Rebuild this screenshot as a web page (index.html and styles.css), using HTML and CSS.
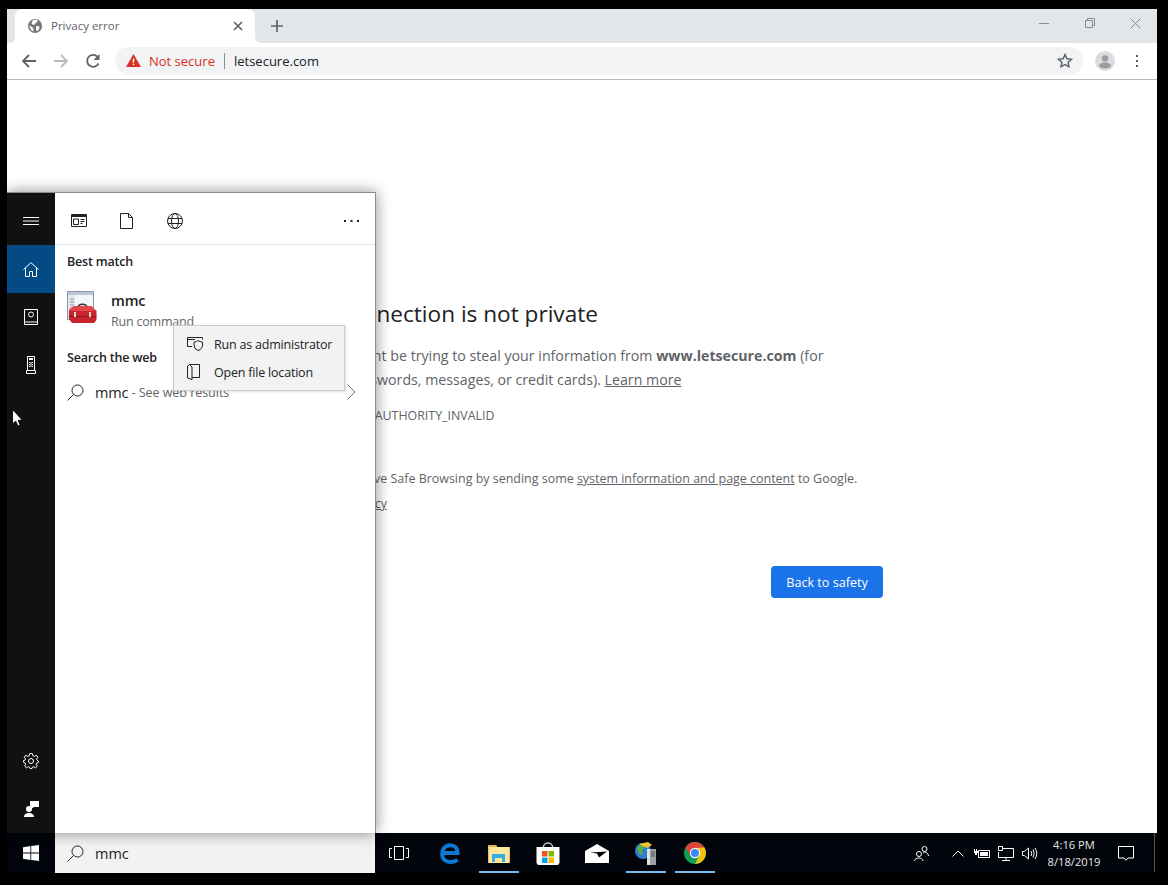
FILE: index.html
```html
<!DOCTYPE html>
<html lang="en">

<head>
    <meta charset="UTF-8">
    <meta name="viewport" content="width=device-width, initial-scale=1.0">
    <title>Privacy error</title>
    <link rel="stylesheet" href="styles.css">
</head>

<body>
    <div class="desktop">
        <!-- browser window -->
        <div class="browser">
            <div class="tabstrip">
                <div class="tab">
                    <svg class="favicon" width="14" height="14" viewBox="0 0 14 14">
                        <circle cx="7" cy="7" r="7" fill="#757575" />
                        <path d="M5 1 L9 .8 L9.5 3 L7.5 4 L7 5.5 L4.5 5.8 L3.5 4 Z M8 7 L11.5 7.5 L11 10.5 L9 12.5 L8 10 Z M1 6.5 L4 8 L5.5 9.5 L5.5 12.5 L3 11 Z" fill="#fff" />
                    </svg>
                    <span class="tab-title">Privacy error</span>
                    <svg class="tab-close" width="10" height="10" viewBox="0 0 10 10">
                        <path d="M1 1 L9 9 M9 1 L1 9" stroke="#5f6368" stroke-width="1.7" />
                    </svg>
                </div>
                <svg class="newtab" width="12" height="12" viewBox="0 0 12 12">
                    <path d="M6 0 V12 M0 6 H12" stroke="#5f6368" stroke-width="1.7" />
                </svg>
                <div class="winbtns">
                    <svg width="10" height="10" viewBox="0 0 10 10"><path d="M0 5.5 H10" stroke="#8a8d90" /></svg>
                    <svg width="10" height="10" viewBox="0 0 10 10"><path d="M.5 2.5 H7.5 V9.5 H.5 Z M2.5 2.5 V.5 H9.5 V7.5 H7.5" fill="none" stroke="#8a8d90" /></svg>
                    <svg width="11" height="11" viewBox="0 0 11 11"><path d="M.5 .5 L10.5 10.5 M10.5 .5 L.5 10.5" stroke="#8a8d90" /></svg>
                </div>
            </div>

            <div class="toolbar">
                <svg class="navicon" width="16" height="16" viewBox="0 0 16 16">
                    <path d="M15 8 H2 M8 2 L2 8 L8 14" fill="none" stroke="#5f6368" stroke-width="1.8" />
                </svg>
                <svg class="navicon" width="16" height="16" viewBox="0 0 16 16">
                    <path d="M1 8 H14 M8 2 L14 8 L8 14" fill="none" stroke="#b9bbbe" stroke-width="1.8" />
                </svg>
                <svg class="navicon" width="16" height="16" viewBox="0 0 16 16">
                    <path d="M13.5 10.5 A6 6 0 1 1 12.4 3.6" fill="none" stroke="#5f6368" stroke-width="1.8" />
                    <path d="M14.5 1 V7 H8.5 Z" fill="#5f6368" />
                </svg>
                <div class="omnibox">
                    <svg width="15" height="13" viewBox="0 0 15 13">
                        <path d="M7.5 0 L15 13 H0 Z" fill="#d93025" />
                        <path d="M6.8 4.5 H8.2 V8.8 H6.8 Z M6.8 9.8 H8.2 V11.2 H6.8 Z" fill="#fff" />
                    </svg>
                    <span class="not-secure">Not secure</span>
                    <span class="omni-sep"></span>
                    <span class="url">letsecure.com</span>
                    <svg class="star" width="16" height="15" viewBox="0 0 16 15">
                        <path d="M8 1.6 L9.9 5.8 L14.5 6.3 L11.1 9.3 L12 13.7 L8 11.5 L4 13.7 L4.9 9.3 L1.5 6.3 L6.1 5.8 Z" fill="none" stroke="#5f6368" stroke-width="1.5" />
                    </svg>
                </div>
                <svg class="avatar" width="20" height="20" viewBox="0 0 20 20">
                    <circle cx="10" cy="10" r="10" fill="#dadce0" />
                    <circle cx="10" cy="7.5" r="3.2" fill="#9a9da1" />
                    <ellipse cx="10" cy="14.5" rx="6" ry="3" fill="#9a9da1" />
                </svg>
                <svg class="dots" width="4" height="14" viewBox="0 0 4 14">
                    <path d="M1 1 H3 V3 H1 Z M1 6 H3 V8 H1 Z M1 11 H3 V13 H1 Z" fill="#5f6368" />
                </svg>
            </div>

            <!-- interstitial -->
            <div class="page">
                <div class="interstitial">
                    <h1>Your connection is not private</h1>
                    <p class="lead">Attackers might be trying to steal your information from <strong>www.letsecure.com</strong> (for example, passwords, messages, or credit cards). <a href="#">Learn more</a></p>
                    <p class="errcode">NET::ERR_CERT_AUTHORITY_INVALID</p>
                    <p class="optin">Help improve Safe Browsing by sending some <a href="#">system information and page content</a> to Google. <a href="#">Privacy policy</a></p>
                    <div class="actions">
                        <button class="advanced">Advanced</button>
                        <button class="safety">Back to safety</button>
                    </div>
                </div>
            </div>
        </div>

        <!-- taskbar -->
        <div class="taskbar">
            <div class="startbtn">
                <svg width="16" height="16" viewBox="0 0 16 16">
                    <path d="M0 2.2 L7.4 1.1 V7.6 H0 Z M8.2 1 L16 0 V7.6 H8.2 Z M0 8.4 H7.4 V14.9 L0 13.8 Z M8.2 8.4 H16 V16 L8.2 15 Z" fill="#fff" />
                </svg>
            </div>
            <div class="searchbox">
                <svg class="lens" width="17" height="17" viewBox="0 0 17 17">
                    <circle cx="10.5" cy="6.5" r="5.5" fill="none" stroke="#222" />
                    <path d="M6.5 10.5 L.5 16.5" stroke="#222" />
                </svg>
                <span>mmc</span>
            </div>
            <div class="apps">
                <div class="app">
                    <svg class="taskview" width="20" height="14" viewBox="0 0 20 14">
                        <path d="M5.5 .5 H14.5 V13.5 H5.5 Z M3 2.5 H.5 V11.5 H3 M17 2.5 H19.5 V11.5 H17" fill="none" stroke="#fff" />
                    </svg>
                </div>
                <div class="app">
                    <svg width="20" height="21" viewBox="0 0 20 21">
                        <path d="M3.5 10 H17.5 C17.5 5 14.5 2.2 10.5 2.2 C5.5 2.2 2.2 6 2.2 11 C2.2 16.5 6 19 10.5 19 C13.5 19 15.5 18.2 17.5 16.8" fill="none" stroke="#0a78d4" stroke-width="4" />
                    </svg>
                </div>
                <div class="app is-open">
                    <svg width="22" height="19" viewBox="0 0 22 19">
                        <path d="M0 1 H8 L9 3 H22 V19 H0 Z" fill="#fce79c" />
                        <path d="M0 1 H8 L9 3 H0 Z" fill="#e8b64a" />
                        <path d="M0 3 H1 V19 H0 Z M21 3 H22 V19 H21 Z" fill="#e3c471" />
                        <path d="M4 18 V10 H17 V18 H14 V14 H7 V18 Z" fill="#35aee6" />
                    </svg>
                </div>
                <div class="app">
                    <svg width="24" height="23" viewBox="0 0 24 23">
                        <path d="M7 7 C7 -1 17 -1 17 7" fill="none" stroke="#ccc" stroke-width="1.5" />
                        <path d="M.5 5 H23.5 V21 L22 23 H2 L.5 21 Z" fill="#fff" />
                        <path d="M6 9 H11.5 V14.5 H6 Z" fill="#f25022" />
                        <path d="M12.5 9 H18 V14.5 H12.5 Z" fill="#7fba00" />
                        <path d="M6 15.5 H11.5 V21 H6 Z" fill="#00a4ef" />
                        <path d="M12.5 15.5 H18 V21 H12.5 Z" fill="#ffb900" />
                    </svg>
                </div>
                <div class="app">
                    <svg width="24" height="19" viewBox="0 0 24 19">
                        <path d="M0 7 L12 0 L24 7 V19 H0 Z" fill="#fff" />
                        <path d="M5 8.5 L22 7.5 L14 13.5 L12 9.5 Z" fill="#01040a" />
                    </svg>
                </div>
                <div class="app is-open">
                    <svg width="24" height="24" viewBox="0 0 24 24">
                        <circle cx="9" cy="10" r="8" fill="#2f7fd0" />
                        <path d="M3 7 L8 2 L12 5 L8 9 L9 14 L5 13 Z" fill="#57b04a" />
                        <path d="M5 3 L14 1 L18 4 L13 7 L9 5 Z" fill="#f2c230" />
                        <path d="M13 8 H22 V24 H13 Z" fill="#9aa0a0" />
                        <path d="M13 8 H16 V24 H13 Z" fill="#dfe3e3" />
                        <path d="M17 11 H21 M17 13 H21 M17 15 H21" stroke="#555" />
                    </svg>
                </div>
                <div class="app is-open">
                    <svg width="22" height="22" viewBox="0 0 22 22">
                        <circle cx="11" cy="11" r="11" fill="#0f9d58" />
                        <path d="M11 0 A11 11 0 0 0 1.5 5.5 L6.5 13.5 L11 6 H20.5 A11 11 0 0 0 11 0 Z" fill="#db4437" />
                        <path d="M20.5 5.5 A11 11 0 0 1 11 22 L15.5 13.5 L11 6 Z" fill="#f4c20d" />
                        <circle cx="11" cy="11" r="5.2" fill="#fff" />
                        <circle cx="11" cy="11" r="4" fill="#4285f4" />
                    </svg>
                </div>
            </div>
            <div class="tray">
                <svg class="tray-people" width="15" height="15" viewBox="0 0 15 15">
                    <circle cx="5" cy="8" r="2.5" fill="none" stroke="#fff" />
                    <path d="M.5 15 C.5 11 9 11 9 15" fill="none" stroke="#fff" />
                    <circle cx="10.5" cy="3" r="2.5" fill="none" stroke="#fff" />
                    <path d="M9 6.5 C11 5.5 14 6.5 14.5 10" fill="none" stroke="#fff" />
                </svg>
                <svg class="tray-chevron" width="12" height="7" viewBox="0 0 12 7">
                    <path d="M.5 6.5 L6 1 L11.5 6.5" fill="none" stroke="#fff" />
                </svg>
                <svg class="tray-battery" width="16" height="11" viewBox="0 0 16 11">
                    <path d="M4.5 2.5 H15.5 V9.5 H4.5 Z" fill="none" stroke="#fff" />
                    <path d="M6 4 H14 V8 H6 Z M0 1 H1 V3 H2 V1 H3 V3 H4 V5 H3 V7 H1 V5 H0 Z" fill="#fff" />
                </svg>
                <svg class="tray-net" width="16" height="15" viewBox="0 0 16 15">
                    <path d="M4 2.5 H15.5 V11.5 H.5 V6" fill="none" stroke="#fff" />
                    <path d="M.5 .5 H4.5 V4.5 H.5 Z M8 11.5 V14.5 M4 14.5 H12" fill="none" stroke="#fff" />
                </svg>
                <svg class="tray-vol" width="16" height="13" viewBox="0 0 16 13">
                    <path d="M.5 4.5 H2.5 L6.5 1 V12 L2.5 8.5 H.5 Z" fill="none" stroke="#fff" />
                    <path d="M9 4 Q10.5 6.5 9 9 M11 2.5 Q13.5 6.5 11 10.5 M13 1 Q16.5 6.5 13 12" fill="none" stroke="#fff" />
                </svg>
                <div class="clock">
                    <span>4:16 PM</span>
                    <span>8/18/2019</span>
                </div>
                <svg class="tray-notif" width="16" height="15" viewBox="0 0 16 15">
                    <path d="M.5 .5 H15.5 V12 H10 L8 14.3 L6 12 H.5 Z" fill="none" stroke="#fff" />
                </svg>
                <span class="show-desktop"></span>
            </div>
        </div>

        <!-- start search panel, sits on top of the browser -->
        <div class="panel">
            <div class="rail">
                <div class="rail-item">
                    <svg width="16" height="8" viewBox="0 0 16 8"><path d="M0 .5 H16 M0 4 H16 M0 7.5 H16" stroke="#fff" /></svg>
                </div>
                <div class="rail-item is-active">
                    <svg width="16" height="15" viewBox="0 0 16 15"><path d="M.5 7.5 L8 .7 L15.5 7.5 M2.5 6 V14.5 H6.5 V9.5 H9.5 V14.5 H13.5 V6" fill="none" stroke="#fff" /></svg>
                </div>
                <div class="rail-item">
                    <svg width="14" height="16" viewBox="0 0 14 16"><path d="M.5 .5 H13.5 V15.5 H.5 Z M.5 13 H13.5" fill="none" stroke="#fff" /><circle cx="7" cy="5.5" r="2.5" fill="none" stroke="#fff" /></svg>
                </div>
                <div class="rail-item">
                    <svg width="10" height="18" viewBox="0 0 10 18"><path d="M1.5 .5 H8.5 V14.5 H1.5 Z M.5 14.5 H9.5 V17.5 H.5 Z" fill="none" stroke="#fff" /><path d="M3 2 H7 V4 H3 Z M3 6 H4 V7 H3 Z M6 6 H7 V7 H6 Z M3 8 H4 V9 H3 Z M6 8 H7 V9 H6 Z M3 10 H4 V11 H3 Z M6 10 H7 V11 H6 Z M4.5 6 H5.5 V11 H4.5 Z" fill="#fff" /></svg>
                </div>
                <div class="rail-gap"></div>
                <div class="rail-item">
                    <svg width="16" height="16" viewBox="0 0 16 16">
                        <circle cx="8" cy="8" r="2.5" fill="none" stroke="#fff" />
                        <path d="M6.7 .5 H9.3 L9.7 2.6 L11.4 3.4 L13.2 2.2 L14.9 4.2 L13.5 5.8 L14 7.2 L15.5 8 V9.3 L13.8 10 L13.3 11.4 L14.3 13.2 L12.4 14.9 L10.8 13.7 L9.5 14.1 L9 15.5 H7 L6.5 14.1 L5.2 13.7 L3.6 14.9 L1.7 13.2 L2.7 11.4 L2.2 10 L.5 9.3 V7.5 L2 7.2 L2.5 5.8 L1.1 4.2 L2.8 2.2 L4.6 3.4 L6.3 2.6 Z" fill="none" stroke="#fff" />
                    </svg>
                </div>
                <div class="rail-item">
                    <svg width="15" height="16" viewBox="0 0 15 16">
                        <circle cx="5" cy="8" r="3" fill="#fff" />
                        <path d="M0 16 C0 10.5 10 10.5 10 16 Z M6 0 H15 V6 H10 L7 8 V5 H6 Z" fill="#fff" />
                    </svg>
                </div>
            </div>
            <div class="results">
                <div class="scopes">
                    <svg width="16" height="13" viewBox="0 0 16 13">
                        <path d="M.5 .5 H15.5 V12.5 H.5 Z" fill="none" stroke="#222" />
                        <path d="M1 1 H15 V3 H1 Z" fill="#222" />
                        <path d="M2.5 5 H7.5 V10.5 H2.5 Z" fill="none" stroke="#222" />
                        <path d="M9.5 5.5 H13.5 M9.5 7.5 H13.5 M9.5 9.5 H11.5" stroke="#222" />
                    </svg>
                    <svg width="13" height="16" viewBox="0 0 13 16">
                        <path d="M.5 .5 H8.5 L12.5 4.5 V15.5 H.5 Z M8.5 .5 V4.5 H12.5" fill="none" stroke="#222" />
                    </svg>
                    <svg class="globe" width="16" height="16" viewBox="0 0 16 16">
                        <circle cx="8" cy="8" r="7.5" fill="none" stroke="#222" />
                        <ellipse cx="8" cy="8" rx="3.5" ry="7.5" fill="none" stroke="#222" />
                        <path d="M1 5.5 H15 M1 10.5 H15" stroke="#222" />
                    </svg>
                    <svg class="more" width="15" height="2" viewBox="0 0 15 2">
                        <path d="M0 0 H2 V2 H0 Z M6.5 0 H8.5 V2 H6.5 Z M13 0 H15 V2 H13 Z" fill="#222" />
                    </svg>
                </div>
                <div class="section-title first">Best match</div>
                <div class="match">
                    <svg width="30" height="33" viewBox="0 0 30 33">
                        <path d="M.5 .5 H26.5 V28.5 H.5 Z" fill="#f4f6f8" stroke="#8996a3" />
                        <path d="M1 1 H26 V4 H1 Z" fill="#b9c7d6" />
                        <path d="M1 4 H8 V28 H1 Z" fill="#e3e8ee" />
                        <path d="M3 8 H7 M3 11 H7 M3 14 H7 M3 17 H7" stroke="#8996a3" />
                        <path d="M11 17 C11 12 20 12 20 17" fill="none" stroke="#333" stroke-width="1.6" />
                        <path d="M2 19 L7 15 H24 L29.5 20 V29 L27 32 H5 L2 28 Z" fill="#c8242b" />
                        <path d="M2 19 L7 15 H24 L29.5 20 H2 Z" fill="#e0474a" />
                        <path d="M2 25 H29.5 V26 H2 Z" fill="#8d1418" />
                        <path d="M7 21 H9 V26 H7 Z M22 21 H24 V26 H22 Z" fill="#d9d9d9" />
                    </svg>
                    <div class="match-text">
                        <div class="match-name">mmc</div>
                        <div class="match-kind">Run command</div>
                    </div>
                </div>
                <div class="section-title">Search the web</div>
                <div class="webrow">
                    <svg class="lens" width="17" height="17" viewBox="0 0 17 17">
                        <circle cx="10.5" cy="6.5" r="5.5" fill="none" stroke="#222" />
                        <path d="M6.5 10.5 L.5 16.5" stroke="#222" />
                    </svg>
                    <span class="web-query">mmc</span>
                    <span class="web-hint">&nbsp;- See web results</span>
                    <svg class="chevron" width="9" height="16" viewBox="0 0 9 16">
                        <path d="M.5 .5 L8 8 L.5 15.5" fill="none" stroke="#777" />
                    </svg>
                </div>

                <div class="context">
                    <div class="context-item">
                        <svg width="16" height="14" viewBox="0 0 16 14">
                            <path d="M5 9.5 H.5 V.5 H15.5 V2.5 M.5 2.5 H8" fill="none" stroke="#222" />
                            <path d="M7 5 Q10 5 11 3.5 Q13 5 15.5 5 V8 Q15.5 12 11 13.5 Q7 12 7 8 Z" fill="#f2f2f2" stroke="#222" />
                        </svg>
                        <span>Run as administrator</span>
                    </div>
                    <div class="context-item">
                        <svg width="13" height="16" viewBox="0 0 13 16">
                            <path d="M2.5 .5 H12.5 V13.5 H5 M2.5 .5 L.5 2 V14 L5 15.5 V3 L2.5 .5" fill="none" stroke="#222" />
                        </svg>
                        <span>Open file location</span>
                    </div>
                </div>
            </div>
        </div>

        <!-- mouse pointer -->
        <svg class="pointer" width="11" height="18" viewBox="0 0 12 20">
            <path d="M.5 .5 V16.5 L4 13.5 L6.5 19 L9 18 L6.8 12.5 H11.5 Z" fill="#fff" stroke="#000" />
        </svg>
    </div>
</body>

</html>
```

FILE: styles.css
```css
* {
    box-sizing: border-box;
}

body {
    margin: 0;
    background: #000;
    font-family: "Open Sans", "Noto Sans", sans-serif;
}

svg {
    display: block;
    flex: none;
}

.desktop {
    position: relative;
    width: 1168px;
    height: 885px;
    padding: 9px 11px 12px 7px;
    display: flex;
    flex-direction: column;
    overflow: hidden;
    background: #000;
}

/* browser */
.browser {
    flex: 1;
    display: flex;
    flex-direction: column;
    background: #fff;
    min-height: 0;
}

.tabstrip {
    height: 34px;
    background: #e3e6e9;
    display: flex;
    align-items: center;
    padding-left: 8px;
}

.tab {
    position: relative;
    width: 240px;
    height: 34px;
    background: #fff;
    border-radius: 8px 8px 0 0;
    display: flex;
    align-items: center;
    padding: 0 12px 0 13px;
}

/* flared corners at the foot of the tab */
.tab::before,
.tab::after {
    content: "";
    position: absolute;
    bottom: 0;
    width: 6px;
    height: 6px;
}

.tab::before {
    left: -6px;
    background: radial-gradient(circle at 0 0, transparent 6px, #fff 6px);
}

.tab::after {
    right: -6px;
    background: radial-gradient(circle at 100% 0, transparent 6px, #fff 6px);
}

.tab-title {
    margin-left: 9px;
    padding-bottom: 2px;
    font-size: 11.5px;
    color: #5f6368;
    flex: 1;
}

.newtab {
    margin-left: 16px;
}

.winbtns {
    margin-left: auto;
    margin-right: 16px;
    width: 102px;
    display: flex;
    justify-content: space-between;
    align-items: center;
    padding-bottom: 6px;
}

.toolbar {
    height: 37px;
    border-bottom: 1px solid #b8b8b8;
    display: flex;
    align-items: center;
    padding: 0 18px 1px 14px;
}

.navicon {
    margin-right: 16px;
}

.omnibox {
    margin-left: -2px;
    width: 968px;
    height: 28px;
    background: #f1f3f4;
    border-radius: 14px;
    display: flex;
    align-items: center;
    padding: 0 10px 0 11px;
    font-size: 13px;
}

.not-secure {
    margin-left: 8px;
    color: #d93025;
}

.omni-sep {
    width: 1px;
    height: 16px;
    background: #8a8d90;
    margin: 0 9px;
}

.url {
    color: #202124;
}

.star {
    margin-left: auto;
}

.avatar {
    margin-left: 12px;
}

.dots {
    margin-left: 20px;
}

/* interstitial page */
.page {
    flex: 1;
    min-height: 0;
}

.interstitial {
    width: 600px;
    margin-left: 276px;
    padding-top: 218px;
    color: #5f6368;
}

h1 {
    margin: 0;
    font-size: 22.6px;
    font-weight: 400;
    line-height: 32px;
    color: #202124;
}

.lead {
    margin: 14px 0 0;
    font-size: 14.2px;
    line-height: 24px;
}

.lead strong {
    font-weight: 700;
}

a {
    color: inherit;
}

.errcode {
    margin: 15px 0 0;
    font-size: 12.4px;
    line-height: 18px;
}

.optin {
    margin: 41px 0 0;
    padding-left: 26px;
    font-size: 12.46px;
    line-height: 25px;
}

.actions {
    margin-top: 50px;
    display: flex;
    justify-content: space-between;
}

.actions button {
    height: 32px;
    border-radius: 4px;
    font-family: inherit;
    font-size: 12.6px;
}

.advanced {
    width: 90px;
    background: #fff;
    color: #1a73e8;
    border: 1px solid #dadce0;
}

.safety {
    width: 112px;
    background: #1a73e8;
    color: #fff;
    border: 0;
}

/* taskbar */
.taskbar {
    height: 40px;
    background: #01040a;
    display: flex;
    align-items: stretch;
}

.startbtn {
    width: 48px;
    display: flex;
    align-items: center;
    justify-content: center;
}

.searchbox {
    width: 320px;
    background: #f2f2f2;
    display: flex;
    align-items: center;
    padding-left: 12px;
    font-size: 14.5px;
    color: #222;
}

.searchbox span {
    margin-left: 11px;
}

.apps {
    margin-left: 1px;
    display: flex;
}

.app {
    width: 49px;
    display: flex;
    align-items: center;
    justify-content: center;
}

.app.is-open {
    background: linear-gradient(#76b9ed, #76b9ed) center bottom / 40px 2px no-repeat;
}

.taskview {
    margin-left: -4px;
}

.tray {
    flex: 1;
    display: flex;
    align-items: center;
    color: #e8e8e8;
    padding-left: 195px;
}

.tray-chevron {
    margin-left: 23px;
}

.tray-battery {
    margin-left: 10px;
}

.tray-net {
    margin-left: 8px;
}

.tray-vol {
    margin-left: 8px;
}

.clock {
    width: 60px;
    margin-left: 6px;
    display: flex;
    flex-direction: column;
    align-items: center;
    font-size: 11.2px;
    line-height: 17px;
}

.tray-notif {
    margin-left: 14px;
}

.show-desktop {
    width: 1px;
    height: 39px;
    background: #555;
    margin-left: 20px;
    align-self: flex-start;
}

/* search panel */
.panel {
    position: absolute;
    left: 7px;
    top: 192px;
    width: 369px;
    height: 641px;
    display: flex;
    background: #fff;
    border-top: 1px solid #8c8c8c;
    border-right: 1px solid #8c8c8c;
    box-shadow: 0 0 14px rgba(0, 0, 0, 0.45);
}

.rail {
    width: 48px;
    background: #111;
    display: flex;
    flex-direction: column;
}

.rail-item {
    height: 48px;
    display: flex;
    align-items: center;
    justify-content: center;
}

.rail-item:first-child {
    height: 52px;
    padding-top: 4px;
}

.rail-item.is-active {
    background: #044a85;
}

.rail-gap {
    flex: 1;
}

.results {
    position: relative;
    flex: 1;
    color: #222;
    font-size: 12.5px;
    letter-spacing: -0.2px;
}

.scopes {
    height: 52px;
    border-bottom: 1px solid #e5e5e5;
    display: flex;
    align-items: center;
    padding: 4px 16px 0;
    gap: 33px;
}

.globe {
    margin-left: 1px;
}

.more {
    margin-left: auto;
}

.section-title {
    font-weight: 600;
    line-height: 18px;
    margin: 0 0 0 12px;
}

.section-title.first {
    margin-top: 8px;
}

.match {
    display: flex;
    margin: 20px 0 17px 12px;
    height: 41px;
}

.match-text {
    margin-left: 14px;
}

.match-name {
    font-size: 14.5px;
    font-weight: 600;
    line-height: 21px;
    margin-top: -1px;
}

.match-kind {
    color: #666;
    line-height: 21px;
}

.webrow {
    display: flex;
    align-items: center;
    height: 40px;
    margin-top: 5px;
    padding: 0 19px 0 12px;
}

.web-query {
    margin-left: 11px;
    font-size: 14.5px;
}

.web-hint {
    color: #666;
    letter-spacing: -0.03px;
}

.chevron {
    margin-left: auto;
}

.context {
    position: absolute;
    left: 118px;
    top: 132px;
    width: 172px;
    height: 66px;
    padding: 4px 0;
    background: #f2f2f2;
    border: 1px solid #ccc;
    box-shadow: 1px 1px 3px rgba(0, 0, 0, 0.12);
}

.context-item {
    height: 28px;
    display: flex;
    align-items: center;
    padding-left: 13px;
}

.context-item span {
    position: absolute;
    left: 40px;
}

.pointer {
    position: absolute;
    left: 12px;
    top: 409px;
}
```
